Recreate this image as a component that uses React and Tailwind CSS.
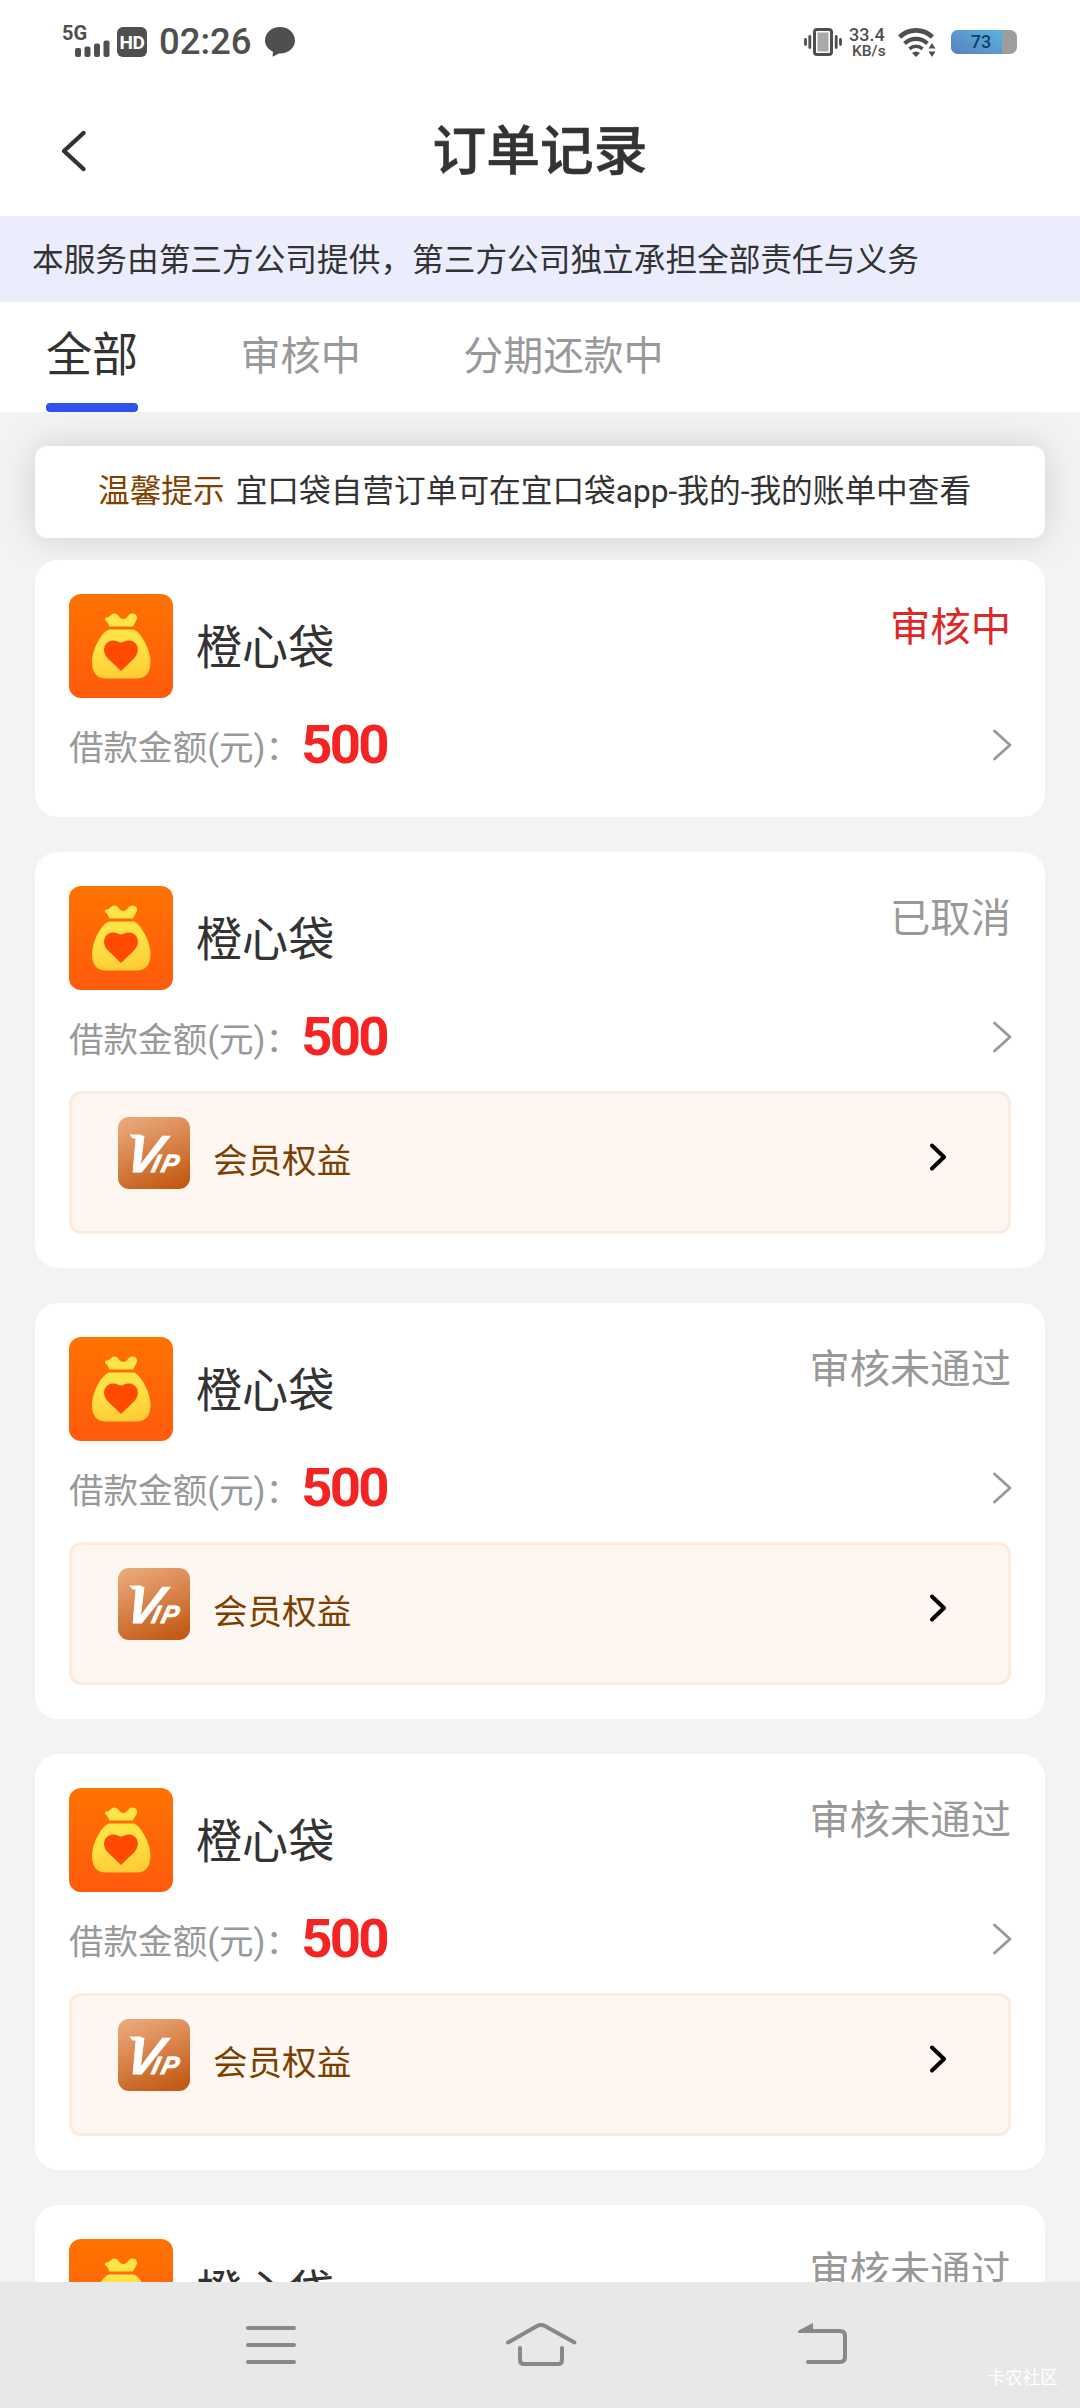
const orders = [
  { id: 1, status: '审核中', active: true, vip: false },
  { id: 2, status: '已取消', active: false, vip: true },
  { id: 3, status: '审核未通过', active: false, vip: true },
  { id: 4, status: '审核未通过', active: false, vip: true },
  { id: 5, status: '审核未通过', active: false, vip: true },
];

const StatusBar = () => (
  <div className="flex h-[83px] items-start justify-between pr-[63px] pl-[62px] pt-[25px] text-[#4f4f4f]">
    <div className="flex items-start">
      <div className="h-[32px] w-[50px]">
        <div className="h-[15px] text-[20px] leading-[16px] font-bold">5G</div>
        <svg className="ml-[12px] block" width="36" height="17" viewBox="0 0 36 17" fill="currentColor">
          <rect x="1" y="8" width="6" height="9" rx="2" />
          <rect x="10.500" y="6.500" width="6" height="10.500" rx="2" />
          <rect x="20" y="3.500" width="6" height="13.500" rx="2" />
          <rect x="29.500" y="0.500" width="6" height="16.500" rx="2" />
        </svg>
      </div>
      <div className="mt-[2px] ml-[5px] flex h-[30px] w-[30px] items-center justify-center rounded-[6px] bg-[#4f4f4f] text-[19px] leading-none font-bold tracking-[-0.500px] text-white">
        HD
      </div>
      <div className="mt-px ml-[12px] text-[36.500px] leading-[32px] font-medium">02:26</div>
      <svg className="mt-[2px] ml-[13px]" width="30" height="30" viewBox="0 0 30 30" fill="currentColor">
        <path d="M15 0C6.500 0 0 6 0 13.500c0 5 3 8.700 8 11.200l-.5 5 6.500-3.200C23 27 30 21 30 13.500 30 6 23.500 0 15 0z" />
      </svg>
    </div>
    <div className="flex items-start">
      <svg className="mt-[3px]" width="38" height="28" viewBox="0 0 38 28" fill="none" stroke="currentColor" strokeWidth="2.800" strokeLinecap="round">
        <rect x="10.500" y="1.500" width="17" height="25" rx="2.500" strokeWidth="3" />
        <rect x="13.500" y="4.500" width="11" height="19" fill="#a9a9a9" stroke="none" />
        <path d="M1.500 11.500v5M5.800 8.500v11M32.200 8.500v11M36.500 11.500v5" />
      </svg>
      <div className="ml-[7px] w-[39px] font-medium">
        <div className="h-[16px] text-[18px] leading-[20px]">33.4</div>
        <div className="pl-[3px] text-[15.500px] leading-[21px]">KB/s</div>
      </div>
      <svg className="mt-[3px] ml-[10px]" width="38" height="29" viewBox="0 0 38 29" fill="none" stroke="currentColor" strokeWidth="4.600">
        <path d="M1.600 9a23.500 23.500 0 0 1 32.800 0" />
        <path d="M6.600 15.400a16.500 16.500 0 0 1 22.800 0" strokeWidth="4.200" />
        <path d="M11.400 20.800a10 10 0 0 1 13.200 0" strokeWidth="3.600" />
        <path d="M14 25q4-3.200 8 0l-4 4z" fill="currentColor" stroke="none" />
        <path d="M34 15l3.500 5.500h-7zM34 29l3.500-5.500h-7z" fill="currentColor" stroke="none" />
      </svg>
      <div className="mt-[5px] ml-[15px] flex h-[24px] w-[66px] overflow-hidden rounded-[7px] bg-[#9d9d9d]">
        <div className="flex w-[51px] items-center justify-center bg-linear-to-tr from-[#5a7fbe] to-[#53b6e2] pl-[9px] text-[18px] leading-none font-medium text-[#123f63]">
          73
        </div>
      </div>
    </div>
  </div>
);

const TitleBar = () => (
  <header className="flex h-[133px] items-start justify-between px-[60px] text-[#333]">
    <svg className="mt-[46px]" width="28" height="44" viewBox="0 0 28 44" fill="none" stroke="currentColor" strokeWidth="4.400" strokeLinecap="round" strokeLinejoin="round">
      <path d="M23.500 4L4 22l19.500 18" />
    </svg>
    <h1 className="mt-[30px] text-[53.700px] leading-[78px] font-medium [-webkit-text-stroke:0.6px_#333]">订单记录</h1>
    <div className="w-[28px]" />
  </header>
);

const Tabs = () => (
  <nav className="flex h-[110px] items-start gap-[102.500px] bg-white pl-[46px] text-[40.100px] text-[#999]">
    <div className="flex h-[110px] w-[92px] flex-col justify-between text-[46.080px] text-[#333]">
      <span className="mt-[19px] leading-[68px] whitespace-nowrap">全部</span>
      <span className="h-[9px] rounded-[4px] bg-[#2f54eb]" />
    </div>
    <span className="mt-[26px] leading-[58px]">审核中</span>
    <span className="mt-[26px] leading-[58px]">分期还款中</span>
  </nav>
);

const BagIcon = () => (
  <svg width="104" height="104" viewBox="0 0 104 104" className="block rounded-[12px]">
    <defs>
      <linearGradient id="bagBg" x1="0" y1="0" x2="0" y2="1">
        <stop offset="0" stopColor="#ff7300" />
        <stop offset="1" stopColor="#ff5a0c" />
      </linearGradient>
      <linearGradient id="bagFill" gradientUnits="userSpaceOnUse" x1="48" y1="20" x2="60" y2="86">
        <stop offset="0" stopColor="#ffe545" />
        <stop offset="0.500" stopColor="#ffe244" />
        <stop offset="1" stopColor="#ffca34" />
      </linearGradient>
    </defs>
    <rect width="104" height="104" fill="url(#bagBg)" />
    <path d="M37.500 23.500C42 23 42 19 46 19.500c4 .5 4 5.500 8.500 5.500 4 0 4.500-5.500 9-5.500 4 0 5.500 3.500 4 6.500L64 32.500H40.500L38 27.500c-3-1.500-2.500-3.500-.5-4z" fill="url(#bagFill)" />
    <path d="M40 35.500h25c7 3 16.500 20 16.500 32.500 0 11-5 16.500-14 16.500H37c-9 0-14-5.500-14-16.500 0-12.500 9-29.500 17-32.500z" fill="url(#bagFill)" />
    <path d="M52 77L38.800 64.200c-7.500-8-2.500-17.700 5.200-17.700 4 0 6 2 8 2s4-2 8-2c7.700 0 12.700 9.700 5.200 17.700z" fill="#ff4a00" />
  </svg>
);

const VipIcon = () => (
  <svg width="72" height="72" viewBox="0 0 72 72" className="block rounded-[11px]">
    <defs>
      <linearGradient id="vipBg" x1="0.300" y1="0" x2="0.700" y2="1">
        <stop offset="0" stopColor="#e9a676" />
        <stop offset="1" stopColor="#c35a15" />
      </linearGradient>
    </defs>
    <rect width="72" height="72" fill="url(#vipBg)" />
    {/* sheared lettering, V is taller than IP */}
    <text transform="translate(0 55) skewX(-14)" x="5" y="0" fontSize="52" fill="#fff" stroke="#fff" strokeWidth="0.800" fontFamily="Liberation Sans, sans-serif" fontWeight="700" fontStyle="italic">
      V<tspan x="32.500 42" fontSize="25">IP</tspan>
    </text>
    <path d="M11.500 17.500h12v4h-9z" fill="#fff" />
  </svg>
);

const VipEntry = () => (
  <div className="mt-[16px] flex h-[143px] items-start rounded-[12px] border-[3px] border-[#fcebdf] bg-[#fef7f1] pt-[23px] pr-[60px] pl-[46px]">
    <VipIcon />
    <span className="mt-[18px] ml-[23px] flex-1 text-[34.560px] leading-[52px] text-[#7d3f00]">会员权益</span>
    <svg className="mt-[24px]" width="20" height="32" viewBox="0 0 20 32" fill="none" stroke="#000" strokeWidth="4" strokeLinecap="round" strokeLinejoin="round">
      <path d="M4 4.500L16 16 4 27.500" />
    </svg>
  </div>
);

const OrderCard = ({ order }) => (
  <section className="rounded-[23px] bg-white px-[34px] pt-[34px] pb-[34px]">
    <div className="flex h-[104px] items-start">
      <BagIcon />
      <h2 className="mt-[19px] ml-[23px] flex-1 text-[46.080px] leading-[70px] text-[#333]">橙心袋</h2>
      <span className={order.active ? 'mt-[4px] text-[40.320px] leading-[60px] text-[#e02727]' : 'mt-[3px] text-[40.320px] leading-[60px] text-[#999]'}>
        {order.status}
      </span>
    </div>
    <div className="flex h-[85px] items-start">
      <span className="mt-[24px] text-[34.560px] leading-[52px] text-[#999]">借款金额(元)：</span>
      <span className="mt-[14px] ml-px flex-1 text-[54.500px] leading-[64px] font-bold tracking-[-2.700px] text-[#f62323]">500</span>
      <svg className="mt-[30px] -mr-[2px]" width="22" height="35" viewBox="0 0 22 35" fill="none" stroke="#999" strokeWidth="2.800" strokeLinecap="round" strokeLinejoin="round">
        <path d="M3.500 3L19 17 3.500 31" />
      </svg>
    </div>
    {order.vip && <VipEntry />}
  </section>
);

const NavBar = () => (
  <footer className="relative flex h-[126px] shrink-0 items-start bg-[#e8e8e8] pt-[36px] pl-[244px]">
    <svg width="54" height="54" viewBox="0 0 54 54" fill="none" stroke="#888" strokeWidth="4" strokeLinecap="round">
      <path d="M4 10h46M4 27h46M4 44h46" />
    </svg>
    <svg className="ml-[206px]" width="76" height="54" viewBox="0 0 76 54" fill="none" stroke="#888" strokeWidth="4" strokeLinecap="round" strokeLinejoin="round">
      <path d="M4 24.500L33 8q4-2 8 0l29.500 16.500" />
      <path d="M16 30v12q0 4 4 4h34q4 0 4-4V30" />
    </svg>
    <svg className="ml-[214px]" width="60" height="54" viewBox="0 0 60 54" fill="none" stroke="#888" strokeWidth="4" strokeLinecap="round" strokeLinejoin="round">
      <path d="M8 13h38q5 0 5 5v21q0 5-5 5H14" />
      <path d="M4 14.500q-.5-1 1-2.300L19 5v10H5z" fill="#888" stroke="none" />
    </svg>
    <span className="absolute top-[84px] right-[22px] text-[17.700px] leading-[24px] text-white">卡农社区</span>
  </footer>
);

export default function App() {
  return (
    <div className="flex h-[2408px] w-[1080px] flex-col overflow-hidden bg-white font-['Roboto','Noto_Sans_CJK_SC',sans-serif]">
      <StatusBar />
      <TitleBar />
      <div className="h-[86px] bg-[#ebedfd] pt-[21px] pl-[32px] text-[31.680px] leading-[48px] text-[#333]">
        本服务由第三方公司提供，第三方公司独立承担全部责任与义务
      </div>
      <Tabs />
      <main className="flex min-h-0 flex-1 flex-col overflow-hidden bg-[#f3f3f3] px-[35px] pt-[34px]">
        <div className="flex h-[92px] shrink-0 rounded-[12px] bg-white pt-[22px] pl-[63px] text-[31.680px] leading-[48px] text-[#333] shadow-[0_0_36px_rgba(0,0,0,0.150)]">
          <span className="mr-[11px] text-[#824100]">温馨提示</span>
          宜口袋自营订单可在宜口袋app-我的-我的账单中查看
        </div>
        <div className="relative mt-[22px] flex flex-col gap-[35px]">
          {orders.map((order) => (
            <OrderCard key={order.id} order={order} />
          ))}
        </div>
      </main>
      <NavBar />
    </div>
  );
}
